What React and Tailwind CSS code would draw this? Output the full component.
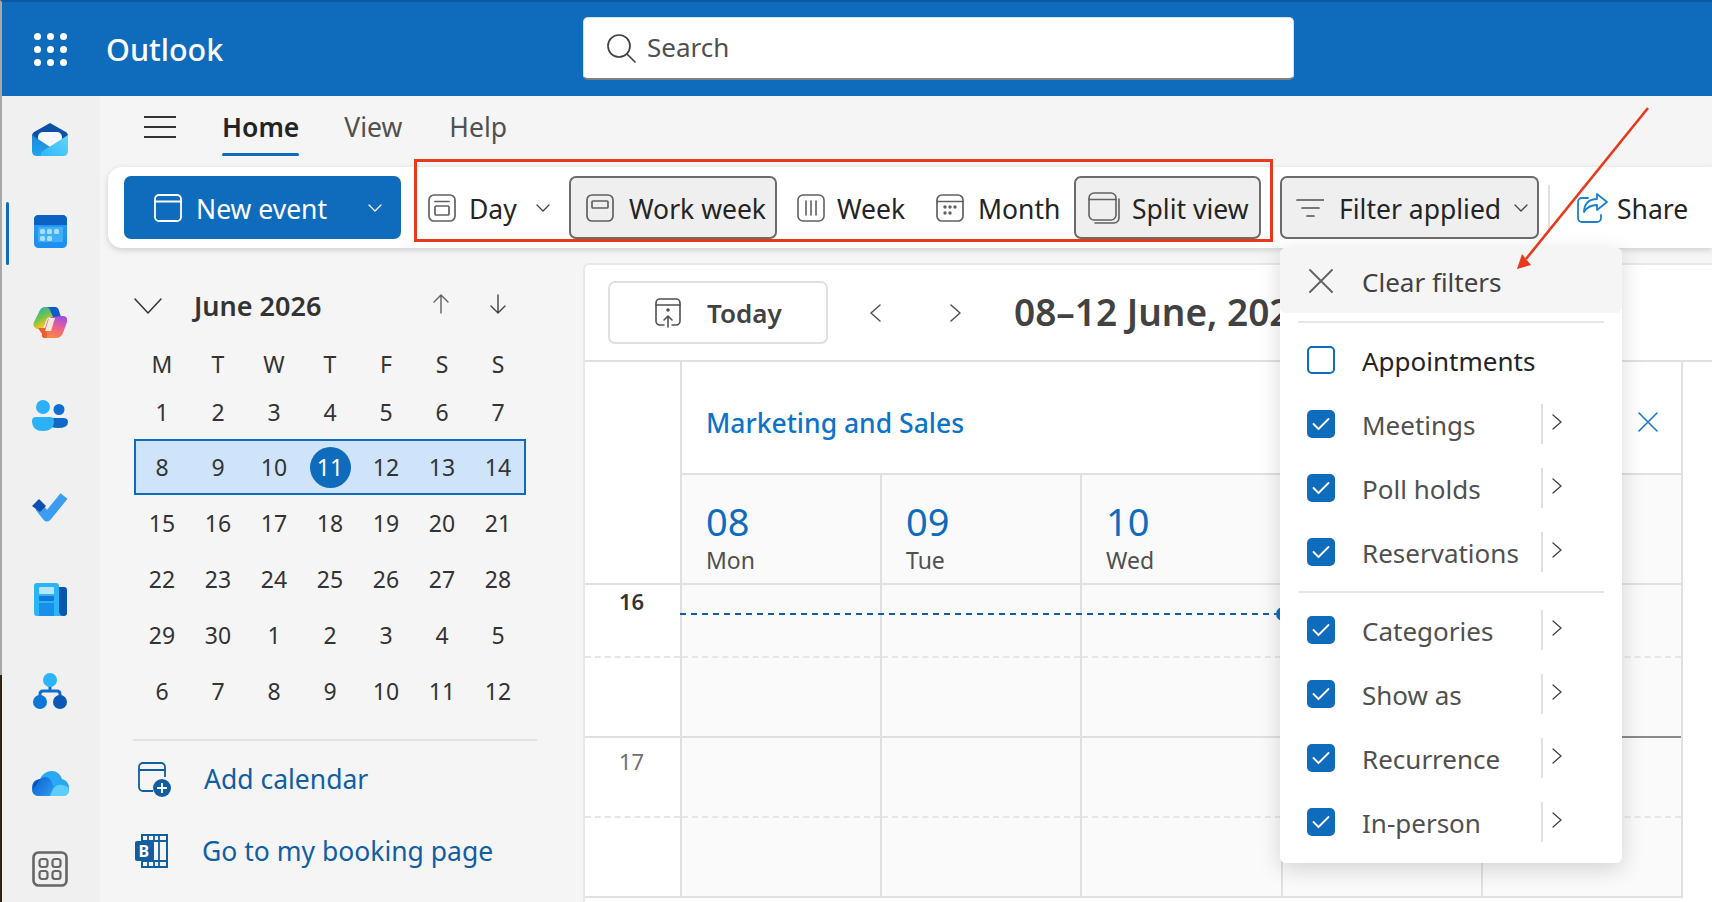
import React from 'react';

const monthRows = [
  ['1', '2', '3', '4', '5', '6', '7'],
  ['8', '9', '10', '11', '12', '13', '14'],
  ['15', '16', '17', '18', '19', '20', '21'],
  ['22', '23', '24', '25', '26', '27', '28'],
  ['29', '30', '1', '2', '3', '4', '5'],
  ['6', '7', '8', '9', '10', '11', '12'],
];

const filterRows = [
  [
    { label: 'Appointments', checked: false },
    { label: 'Meetings', checked: true },
    { label: 'Poll holds', checked: true },
    { label: 'Reservations', checked: true },
  ],
  [
    { label: 'Categories', checked: true },
    { label: 'Show as', checked: true },
    { label: 'Recurrence', checked: true },
    { label: 'In-person', checked: true },
  ],
];

// Thin line icons
const Line = ({ w = 28, h = 28, children, className = '', color = '#616161', sw = 1.6 }) => (
  <svg width={w} height={h} viewBox={`0 0 ${w} ${h}`} fill="none" stroke={color} strokeWidth={sw} strokeLinecap="round" strokeLinejoin="round" className={`shrink-0 ${className}`}>
    {children}
  </svg>
);

const ChevronDown = ({ color = '#424242' }) => (
  <Line w={14} h={8} color={color} sw={1.3}><path d="M1 1l6 6 6-6" /></Line>
);

const ChevronRight = () => (
  <Line w={10} h={16} color="#424242" sw={1.3}><path d="M1 1l8 7-8 7" /></Line>
);

const MailIcon = () => (
  <svg width="36" height="33" viewBox="0 0 36 33" className="shrink-0">
    <defs>
      <linearGradient id="mailR" x1="0" y1="1" x2="1" y2="0"><stop offset="0" stopColor="#30b8f5" /><stop offset="1" stopColor="#62d6fa" /></linearGradient>
      <linearGradient id="mailL" x1="0" y1="0" x2="0" y2="1"><stop offset="0" stopColor="#1a86d8" /><stop offset="1" stopColor="#20a4ee" /></linearGradient>
    </defs>
    <path d="M18 0L33 8.5Q36 10 36 13V20H0V13Q0 10 3 8.5Z" fill="#0a52a8" />
    <rect x="6" y="9" width="24" height="16" rx="5" fill="#f5f8fd" />
    <path d="M0 12L18 24 10 33H5Q0 33 0 28Z" fill="url(#mailL)" />
    <path d="M36 12V28Q36 33 31 33H9Q8 30 11 28Z" fill="url(#mailR)" />
  </svg>
);

const CalendarIcon = () => (
  <svg width="33" height="33" viewBox="0 0 33 33" className="shrink-0">
    <defs>
      <linearGradient id="calB" x1="0" y1="0" x2="0" y2="1"><stop offset="0" stopColor="#2b9cf2" /><stop offset="1" stopColor="#1b8ef0" /></linearGradient>
    </defs>
    <rect width="33" height="33" rx="4.5" fill="url(#calB)" />
    <path d="M0 10V4.5A4.5 4.5 0 0 1 4.5 0h24A4.5 4.5 0 0 1 33 4.5V10Z" fill="#0b62c4" />
    <rect x="4" y="12" width="25" height="15" rx="1" fill="#3fb0f7" />
    {[[6, 14], [13, 14], [20, 14], [6, 21], [13, 21]].map(([x, y]) => (
      <rect key={`${x}-${y}`} x={x} y={y} width="5" height="5" rx="1.5" fill="#a9defc" />
    ))}
  </svg>
);

const CopilotIcon = () => (
  <svg width="34" height="32" viewBox="0 0 34 32" className="shrink-0">
    <defs>
      <linearGradient id="copL" x1="0" y1="0" x2="0.7" y2="1"><stop offset="0" stopColor="#16a5d8" /><stop offset="0.45" stopColor="#6fc44a" /><stop offset="0.75" stopColor="#f5c522" /></linearGradient>
      <linearGradient id="copR" x1="0.6" y1="0" x2="0.3" y2="1"><stop offset="0" stopColor="#a44fe0" /><stop offset="0.5" stopColor="#f0608a" /><stop offset="1" stopColor="#fb8a3c" /></linearGradient>
    </defs>
    <path d="M12 0H22Q25 0 26 4L28 10H18Q14 10 13 14L10 22H4Q-1 20 1 15L6 5Q8 0 12 0Z" fill="url(#copL)" />
    <path d="M22 0Q25 0 26 4L28 10H20L17 3Q16 0 13 0Z" fill="#0c5ccf" />
    <path d="M28 9H30Q35 9 34 15L30 26Q28 31 23 31H12Q9 31 10 27L14 15Q15 10 20 10Z" fill="url(#copR)" />
    <path d="M5 21H13L14 28Q14 31 12 31Q8 31 9 27Z" fill="#ee5c2e" />
    <path d="M16 11H22L18 24H12Z" fill="#f4ead8" />
  </svg>
);

const PeopleIcon = () => (
  <svg width="36" height="31" viewBox="0 0 36 31" className="shrink-0">
    <circle cx="11" cy="7" r="7" fill="#2cb0fa" />
    <circle cx="27" cy="9.5" r="5.5" fill="#0f6fd0" />
    <path d="M16 18H31Q36 18 36 22Q36 28 26 28Q18 28 16 24Z" fill="#0d68c8" />
    <path d="M4 17H18Q22 17 22 21Q22 31 11 31Q0 31 0 21Q0 17 4 17Z" fill="#2cb0fa" />
  </svg>
);

const TodoIcon = () => (
  <svg width="38" height="32" viewBox="0 0 38 32" className="shrink-0">
    <path d="M8 16L16 26 33 5" fill="none" stroke="#3b9df0" strokeWidth="9" strokeLinejoin="round" />
    <path d="M8 8L15 15 9 21 1 15Z" fill="#114fb3" />
  </svg>
);

const NewsIcon = () => (
  <svg width="33" height="33" viewBox="0 0 33 33" className="shrink-0">
    <rect x="20" y="4" width="13" height="29" rx="3" fill="#0956ad" />
    <path d="M3 0H22Q25 0 25 3V28Q25 33 30 33H3Q0 33 0 30V3Q0 0 3 0Z" fill="#2cb4f8" />
    <rect x="5" y="4" width="15" height="7" rx="1" fill="#b6e6fd" />
    <rect x="5" y="13" width="15" height="5" rx="1" fill="#0f78d8" />
    <rect x="5" y="20" width="15" height="13" fill="#1690ea" />
  </svg>
);

const OrgIcon = () => (
  <svg width="34" height="36" viewBox="0 0 34 36" className="shrink-0">
    <path d="M17 10V18M7 26V21Q7 18 10 18H24Q27 18 27 21V26" fill="none" stroke="#0f6fd0" strokeWidth="3" />
    <circle cx="17" cy="7" r="7" fill="#2cb4fb" />
    <circle cx="7" cy="29" r="7" fill="#0d74d8" />
    <circle cx="27" cy="29" r="7" fill="#0b58b8" />
  </svg>
);

const OneDriveIcon = () => (
  <svg width="37" height="25" viewBox="0 0 37 25" className="shrink-0">
    <defs>
      <linearGradient id="odA" x1="0" y1="0.2" x2="1" y2="0.8"><stop offset="0" stopColor="#0f62d0" /><stop offset="1" stopColor="#2f9bf2" /></linearGradient>
    </defs>
    <path d="M7 25Q0 25 0 17Q0 9 8 8Q12 0 20 0Q27 0 30 8Q37 10 37 17Q37 25 30 25Z" fill="#28a8f5" />
    <path d="M7 25Q0 25 0 17Q0 9 8 8Q14 4 18 8Q22 14 24 25Z" fill="url(#odA)" />
    <path d="M4 11Q1 14 1 18Q4 14 8 8Z" fill="#0a45ad" />
    <path d="M18 25Q22 12 30 14Q37 15 37 20Q37 25 30 25Z" fill="#5fcdfa" />
  </svg>
);

const AppsIcon = () => (
  <svg width="36" height="36" viewBox="0 0 36 36" fill="none" stroke="#666" className="shrink-0">
    <rect x="1.5" y="1.5" width="33" height="33" rx="5" strokeWidth="2.6" />
    <rect x="7.5" y="8" width="8" height="8" rx="2.5" strokeWidth="2.2" />
    <rect x="20.5" y="8" width="8" height="8" rx="2.5" strokeWidth="2.2" />
    <rect x="7.5" y="20" width="8" height="8" rx="2.5" strokeWidth="2.2" />
    <rect x="20.5" y="20" width="8" height="8" rx="2.5" strokeWidth="2.2" />
  </svg>
);

const railIcons = [MailIcon, CalendarIcon, CopilotIcon, PeopleIcon, TodoIcon, NewsIcon, OrgIcon, OneDriveIcon];

const Rail = () => (
  <aside className="relative w-[100px] shrink-0 bg-[#f0f0f0] border-l-2 border-[#a8a8a8] flex flex-col items-center pr-[2px]">
    <div className="absolute left-[4px] top-[106px] h-[63px] w-[3px] rounded bg-[#0f6cbd]" />
    <div className="-mt-[3px]" />
    {railIcons.map((Icon, i) => (
      <div key={i} className="flex h-[92px] shrink-0 items-center"><Icon /></div>
    ))}
    <div className="-mt-[6px] flex h-[92px] shrink-0 items-center"><AppsIcon /></div>
    <div className="absolute left-[-2px] top-[579px] bottom-0 w-[2px] bg-[#2b2414]" />
  </aside>
);

const TopBar = () => (
  <header className="h-[96px] shrink-0 flex items-center bg-[#0f6cbd] border-t-2 border-[#0c5aa4] border-l-2 border-l-[#a8a8a8]">
    <div className="ml-[32px] grid grid-cols-3 gap-x-[6px] gap-y-[6px]">
      {Array.from({ length: 9 }).map((_, i) => (
        <span key={i} className="h-[7px] w-[7px] rounded-full bg-white" />
      ))}
    </div>
    <span className="ml-[39px] w-[118px] text-[30.5px] font-medium text-white leading-none">Outlook</span>
    <div className="ml-[359px] -mt-[2px] flex h-[63px] w-[711px] items-center rounded-[5px] bg-white border-b-2 border-[#808080] border-t border-l border-r border-t-[#cfe0f0] border-x-[#cfe0f0] pl-[22px]">
      <Line w={30} h={30} color="#424242" sw={1.7}>
        <circle cx="13" cy="13" r="11" /><path d="M21 21l8 8" />
      </Line>
      <span className="ml-[11px] -mt-[2px] text-[26px] text-[#505050] leading-none">Search</span>
    </div>
  </header>
);

const TabsRow = () => (
  <div className="h-[71px] shrink-0 flex items-start pl-[44px]">
    <div className="mt-[20px] flex h-[22px] w-[32px] flex-col justify-between">
      <span className="h-[2px] bg-[#333]" /><span className="h-[2px] bg-[#333]" /><span className="h-[2px] bg-[#333]" />
    </div>
    <div className="ml-[46px] mt-[13px] flex flex-col">
      <span className="h-[37px] text-[26.5px] font-semibold leading-[37px] text-[#242424]">Home</span>
      <span className="mt-[7px] h-[3px] rounded bg-[#0f6cbd]" />
    </div>
    <span className="ml-[45px] mt-[13px] text-[26.5px] leading-[37px] text-[#505050]">View</span>
    <span className="ml-[47px] mt-[13px] text-[26.5px] leading-[37px] text-[#505050]">Help</span>
  </div>
);

const ToolBtn = ({ width, ml, active, icon, label, textMl = 12, chevron }) => (
  <div
    style={{ width, marginLeft: ml }}
    className={`h-[63px] shrink-0 flex items-center rounded-[7px] ${active ? 'border-2 border-[#6b6b6b] bg-[#efefef]' : 'border-2 border-transparent'}`}
  >
    <span className="ml-[14px] flex w-[30px] justify-center">{icon}</span>
    <span style={{ marginLeft: textMl }} className="mt-[3px] text-[26.5px] leading-none text-[#242424] whitespace-nowrap">{label}</span>
    {chevron}
  </div>
);

const Toolbar = () => (
  <div className="h-[81px] ml-[8px] shrink-0 flex items-center rounded-l-[14px] bg-white pl-[16px] shadow-[0_2px_6px_rgba(0,0,0,0.16)] relative z-10">
    <div className="flex h-[63px] w-[277px] shrink-0 items-center rounded-[7px] bg-[#0f6cbd] pl-[30px] text-white">
      <Line w={28} h={30} color="#fff" sw={1.8}>
        <rect x="1" y="2" width="26" height="26" rx="4" /><path d="M1 8.5h26" />
      </Line>
      <span className="ml-[14px] mt-[3px] text-[26.5px] leading-none">New event</span>
      <span className="ml-[41px]"><ChevronDown color="#fff" /></span>
    </div>
    <ToolBtn
      width={128}
      ml={11}
      label="Day"
      textMl={13}
      icon={<Line w={28} h={28} sw={1.7}><rect x="1" y="1" width="26" height="26" rx="5" /><path d="M7 7.5h14" /><rect x="7" y="12" width="14" height="9" rx="1" /></Line>}
      chevron={<span className="ml-[19px]"><ChevronDown /></span>}
    />
    <ToolBtn
      width={208}
      ml={29}
      active
      label="Work week"
      textMl={14}
      icon={<Line w={28} h={28} sw={1.7}><rect x="1" y="1" width="26" height="26" rx="5" /><rect x="6" y="7" width="16" height="7" rx="1" /></Line>}
    />
    <ToolBtn
      width={126}
      ml={4}
      label="Week"
      icon={<Line w={28} h={28} sw={1.6}><rect x="1" y="1" width="26" height="26" rx="5" /><path d="M9 7v14M14 7v14M19 7v14" /></Line>}
    />
    <ToolBtn
      width={153}
      ml={12}
      label="Month"
      textMl={13}
      icon={<Line w={28} h={28} sw={1.7}><rect x="1" y="1" width="26" height="26" rx="5" /><path d="M1 7.5h26" /><g fill="#616161" stroke="none"><circle cx="9" cy="13" r="1.7" /><circle cx="14" cy="13" r="1.7" /><circle cx="19" cy="13" r="1.7" /><circle cx="9" cy="19" r="1.7" /><circle cx="14" cy="19" r="1.7" /></g></Line>}
    />
    <ToolBtn
      width={187}
      ml={2}
      active
      label="Split view"
      textMl={12}
      icon={<Line w={32} h={32} sw={1.6} className="-ml-[3px]"><rect x="1" y="1" width="27" height="27" rx="5" /><path d="M1 7.5h27" /><path d="M31 7v19a5 5 0 0 1-5 5H7" /></Line>}
    />
    <ToolBtn
      width={259}
      ml={19}
      active
      label="Filter applied"
      textMl={13}
      icon={<Line w={28} h={22} color="#505050" sw={1.7} className="-ml-[3px]"><path d="M1 3h27M6 11h17M11 19h7" /></Line>}
      chevron={<span className="ml-[13px]"><ChevronDown /></span>}
    />
    <span className="ml-[9px] h-[46px] w-[2px] shrink-0 bg-[#e0e0e0]" />
    <span className="ml-[26px] shrink-0">
      <Line w={32} h={32} color="#1a80d0" sw={1.8}>
        <path d="M12 6H6a4 4 0 0 0-4 4v16a4 4 0 0 0 4 4h15a4 4 0 0 0 4-4v-3" />
        <path d="M21 2l10 8-10 8v-5c-6 0-10 2-13 7 0-8 5-13 13-13z" />
      </Line>
    </span>
    <span className="ml-[9px] mt-[3px] text-[26.5px] leading-none text-[#242424] shrink-0">Share</span>
  </div>
);

const MiniCalendar = () => (
  <section className="w-[483px] shrink-0 pl-[33px] pt-[38px]">
    <div className="flex h-[40px] items-center w-[392px]">
      <span className="ml-[1px]"><Line w={28} h={16} color="#333" sw={1.5}><path d="M1 1l13 14L27 1" /></Line></span>
      <span className="ml-[32px] -mt-[1px] text-[27px] font-semibold leading-none text-[#333]">June 2026</span>
      <span className="ml-[112px] -mt-[4px]"><Line w={16} h={20} color="#616161" sw={1.4}><path d="M8 19V1M1 8l7-7 7 7" /></Line></span>
      <span className="ml-[41px] -mt-[4px]"><Line w={16} h={20} color="#424242" sw={1.4}><path d="M8 1v18M1 12l7 7 7-7" /></Line></span>
    </div>
    <div className="ml-[1px] mt-[16px] w-[392px]">
      <div className="grid h-[44px] grid-cols-7 items-center text-center text-[23px] text-[#333]">
        {['M', 'T', 'W', 'T', 'F', 'S', 'S'].map((d, i) => <span key={i}>{d}</span>)}
      </div>
      {monthRows.map((row, r) => (
        <div
          key={r}
          className={`grid grid-cols-7 items-center text-center text-[23px] text-[#333] ${r === 0 ? 'h-[53px]' : 'h-[56px]'} ${r === 1 ? 'shadow-[inset_0_0_0_2px_#0f6cbd] bg-[#cfe4fa]' : ''}`}
        >
          {row.map((d, i) => (
            <span key={i} className="flex justify-center">
              {r === 1 && d === '11' ? (
                <span className="flex h-[41px] w-[41px] items-center justify-center rounded-full bg-[#0f6cbd] text-white">{d}</span>
              ) : d}
            </span>
          ))}
        </div>
      ))}
    </div>
    <div className="mt-[20px] h-[2px] w-[404px] bg-[#e0e0e0]" />
    <div className="mt-[20px] flex h-[36px] items-center text-[26.5px] text-[#115ea3]">
      <svg width="34" height="36" viewBox="0 0 34 36" fill="none" className="ml-[4px] shrink-0">
        <path d="M16 30H6a4 4 0 0 1-4-4V6a4 4 0 0 1 4-4h18a4 4 0 0 1 4 4v10M2 9h26" stroke="#115ea3" strokeWidth="1.8" />
        <circle cx="25" cy="27" r="9" fill="#115ea3" />
        <path d="M25 22v10M20 27h10" stroke="#fff" strokeWidth="1.8" />
      </svg>
      <span className="ml-[33px] leading-none">Add calendar</span>
    </div>
    <div className="mt-[36px] flex h-[36px] items-center text-[26.5px] text-[#115ea3]">
      <svg width="33" height="34" viewBox="0 0 33 34" fill="none" className="ml-[2px] shrink-0">
        <path d="M7 1h25v32H7z" stroke="#115ea3" strokeWidth="2" />
        <path d="M13 1v6M19 1v6M24 1v32M13 27v6M19 27v6M7 7h25M7 27h25" stroke="#115ea3" strokeWidth="1.8" />
        <rect y="7" width="19" height="20" rx="2" fill="#115ea3" />
        <text x="3.5" y="23" fontSize="16" fontWeight="700" fill="#fff" fontFamily="'Noto Sans', sans-serif">B</text>
      </svg>
      <span className="ml-[34px] leading-none whitespace-nowrap">Go to my booking page</span>
    </div>
  </section>
);

const dayWidth = (i) => (i === 2 ? 'w-[201px]' : 'w-[200px]');

const HalfRow = ({ height, dashed, label, bold, darkLast, labelPt = 1 }) => {
  const line = dashed ? 'border-b-2 border-dashed border-[#e6e6e6]' : 'border-b-2 border-[#e0e0e0]';
  return (
    <div style={{ height }} className="flex shrink-0">
      <div style={{ paddingTop: labelPt }} className={`w-[95px] shrink-0 bg-white pl-[34px] text-[22px] leading-[30px] ${line} ${bold ? 'font-semibold text-[#333]' : 'text-[#707070]'}`}>{label}</div>
      {[0, 1, 2, 3, 4].map((i) => (
        <div key={i} className={`${dayWidth(i)} shrink-0 bg-[#fafafa] border-l-2 border-l-[#e0e0e0]`}>
          <div className={`h-full ${line} ${darkLast && i === 4 ? '!border-[#8a8a8a]' : ''}`} />
        </div>
      ))}
      <div className="flex-1 border-l-2 border-[#e0e0e0] bg-white" />
    </div>
  );
};

const CalendarPane = () => (
  <section className="relative mt-[15px] min-w-0 flex-1 rounded-tl-[6px] border-l-2 border-t-2 border-[#e8e8e8] bg-white">
    <div className="flex h-[97px] items-center border-b-2 border-[#e0e0e0] pl-[23px]">
      <div className="flex h-[63px] w-[220px] shrink-0 items-center rounded-[7px] border-2 border-[#e0e0e0] pl-[45px]">
        <Line w={26} h={30} color="#505050" sw={1.6}>
          <path d="M9 27H5a4 4 0 0 1-4-4V5a4 4 0 0 1 4-4h16a4 4 0 0 1 4 4v18a4 4 0 0 1-4 4h-4" /><path d="M1 7h24M13 29V19M9 22l4-4 4 4" /><circle cx="13" cy="12" r="1" fill="#505050" />
        </Line>
        <span className="ml-[26px] text-[26px] font-semibold leading-none text-[#424242]">Today</span>
      </div>
      <span className="ml-[41px]"><Line w={12} h={18} color="#505050" sw={1.5}><path d="M11 1L2 9l9 8" /></Line></span>
      <span className="ml-[69px]"><Line w={12} h={18} color="#505050" sw={1.5}><path d="M1 1l9 8-9 8" /></Line></span>
      <span className="ml-[52px] -mt-[2px] whitespace-nowrap text-[37px] font-semibold leading-none text-[#424242]">08–12 June, 2026</span>
    </div>
    <div className="flex h-[113px]">
      <div className="w-[95px] shrink-0" />
      <div className="flex flex-1 border-l-2 border-b-2 border-[#e0e0e0]">
        <span className="ml-[24px] mt-[44px] h-[34px] text-[26.5px] font-medium leading-[34px] text-[#0c74c8]">Marketing and Sales</span>
      </div>
      <div className="w-[31px] shrink-0 border-l-2 border-[#e0e0e0]" />
    </div>
    <div className="flex h-[110px]">
      <div className="w-[95px] shrink-0 border-b-2 border-[#e0e0e0]" />
      {[['08', 'Mon'], ['09', 'Tue'], ['10', 'Wed'], ['', ''], ['', '']].map(([n, d], i) => (
        <div key={i} className={`${dayWidth(i)} shrink-0 border-l-2 border-b-2 border-[#e0e0e0] bg-[#fafafa] pl-[24px] pt-[26px]`}>
          <div className="h-[40px] text-[38px] leading-[40px] text-[#0f6cbd]">{n}</div>
          <div className="mt-[4px] text-[23px] leading-[30px] text-[#505050]">{d}</div>
        </div>
      ))}
      <div className="flex-1 border-l-2 border-[#e0e0e0]" />
    </div>
    <HalfRow height={73} dashed label="16" bold />
    <HalfRow height={80} label="" darkLast />
    <HalfRow height={80} dashed label="17" labelPt={8} />
    <HalfRow height={80} label="" />
    {/* current time line, its dot tucks under the menu */}
    <div className="absolute left-[95px] top-[342px] flex w-[610px] items-center">
      <div className="h-[2px] flex-1 bg-[repeating-linear-gradient(90deg,#115ea3_0_6px,transparent_6px_11px)]" />
      <div className="h-[14px] w-[14px] rounded-full bg-[#0f6cbd]" />
    </div>
  </section>
);

const FilterMenu = () => (
  <div className="absolute left-[1280px] top-[248px] z-20 h-[615px] w-[342px] rounded-[6px] bg-white shadow-[0_6px_22px_rgba(0,0,0,0.16)]">
    <div className="flex h-[65px] items-center rounded-[6px] bg-[#f5f5f5] pl-[29px]">
      <Line w={24} h={24} color="#616161" sw={1.8}><path d="M1 1l22 22M23 1L1 23" /></Line>
      <span className="ml-[29px] mt-[2px] text-[26px] leading-none text-[#424242]">Clear filters</span>
    </div>
    {filterRows.map((group, g) => (
      <div key={g}>
        <div className={`mx-[18px] h-[2px] bg-[#e6e6e6] ${g === 0 ? 'mt-[8px] mb-[5px]' : 'mt-[7px] mb-[5px]'}`} />
        {group.map((item) => (
          <div key={item.label} className="flex h-[64px] items-center pl-[27px]">
            {item.checked ? (
              <span className="flex h-[28px] w-[28px] shrink-0 items-center justify-center rounded-[5px] bg-[#0f6cbd]">
                <Line w={18} h={14} color="#fff" sw={1.8}><path d="M1.5 7l5 5L16.5 2" /></Line>
              </span>
            ) : (
              <span className="h-[28px] w-[28px] shrink-0 rounded-[5px] border-2 border-[#0f6cbd]" />
            )}
            <span className={`ml-[27px] mt-[2px] w-[179px] text-[26px] leading-none ${item.checked ? 'text-[#505050]' : 'text-[#242424]'}`}>{item.label}</span>
            {item.checked && (
              <span className="flex items-center">
                <span className="h-[40px] w-[2px] bg-[#e0e0e0]" />
                <span className="ml-[9px] -mt-[4px]"><ChevronRight /></span>
              </span>
            )}
          </div>
        ))}
      </div>
    ))}
  </div>
);

export default function App() {
  return (
    <div className="relative flex h-[902px] w-[1712px] flex-col overflow-hidden bg-[#f5f5f5] font-['Noto_Sans',sans-serif]">
      <TopBar />
      <div className="flex min-h-0 flex-1">
        <Rail />
        <main className="flex min-w-0 flex-1 flex-col">
          <TabsRow />
          <Toolbar />
          <div className="flex min-h-0 flex-1">
            <MiniCalendar />
            <CalendarPane />
          </div>
        </main>
      </div>

      {/* close button on the group header, sits beside the menu */}
      <div className="absolute left-[1638px] top-[412px] z-10">
        <Line w={20} h={20} color="#1a78c8" sw={1.6}><path d="M1 1l18 18M19 1L1 19" /></Line>
      </div>

      <FilterMenu />

      {/* red annotations */}
      <div className="pointer-events-none absolute left-[414px] top-[159px] z-30 h-[83px] w-[859px] border-[3px] border-[#e8391c]" />
      <svg width="160" height="180" viewBox="0 0 160 180" className="pointer-events-none absolute left-[1500px] top-[100px] z-30">
        <path d="M148 8L26 159" stroke="#e8391c" strokeWidth="2.6" />
        <path d="M17 169L22 154 31 165Z" fill="#e8391c" />
      </svg>
    </div>
  );
}
